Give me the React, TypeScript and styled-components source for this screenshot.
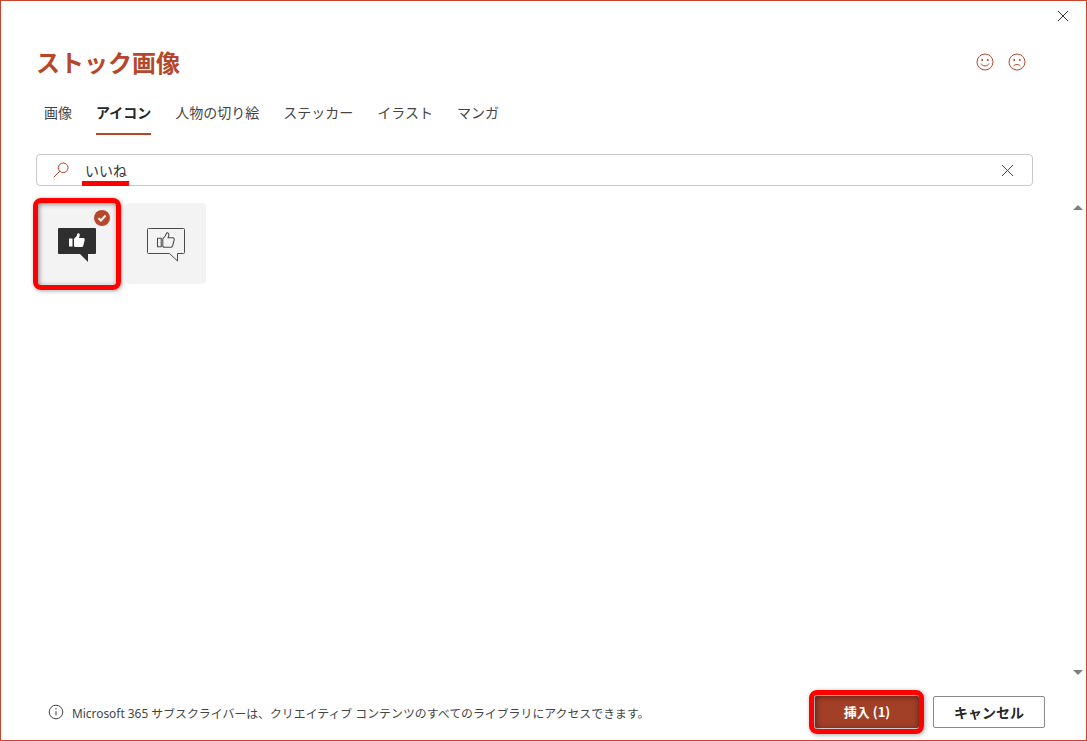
import React from "react";
import styled, { createGlobalStyle } from "styled-components";

const FONT = `"Noto Sans CJK JP", "Noto Sans", sans-serif`;
const LATIN = `"Noto Sans", "Noto Sans CJK JP", sans-serif`;
const ACCENT = "#b7472a";

const Global = createGlobalStyle`
  html, body { margin: 0; padding: 0; background: #fff; }
  * { box-sizing: border-box; }
`;

const Dialog = styled.div`
  width: 1087px;
  height: 741px;
  border: 1px solid #c8442a;
  background: #fff;
  position: relative;
  display: flex;
  flex-direction: column;
  font-family: ${FONT};
  color: #333;
  overflow: hidden;
`;

const CloseRow = styled.div`
  height: 30px;
  display: flex;
  justify-content: flex-end;
  padding: 9px 17px 0 0;
`;

const Body = styled.div`
  flex: 1;
  padding: 0 53px 0 35px;
  display: flex;
  flex-direction: column;
  min-height: 0;
`;

const Header = styled.div`
  height: 58px;
  display: flex;
  align-items: center;
  justify-content: space-between;
  padding: 3px 6px 0 0;
`;

const Title = styled.h1`
  margin: 0;
  font-size: 24px;
  line-height: 34px;
  font-weight: 700;
  color: ${ACCENT};
`;

const Faces = styled.div`
  display: flex;
  gap: 12px;
`;

const Tabs = styled.div`
  display: flex;
  gap: 24px;
  height: 45px;
  padding-left: 8px;
  margin-top: 1px;
`;

const Tab = styled.div<{ $active?: boolean }>`
  height: 45px;
  padding-top: 12px;
  font-size: 14px;
  line-height: 20px;
  font-weight: ${(p) => (p.$active ? 700 : 400)};
  color: ${(p) => (p.$active ? "#262626" : "#444")};
  border-bottom: 2px solid ${(p) => (p.$active ? ACCENT : "transparent")};
`;

const Search = styled.div`
  margin-top: 19px;
  height: 32px;
  border: 1px solid #c8c8c8;
  border-radius: 4px;
  display: flex;
  align-items: center;
  padding: 0 18px 0 15px;
  position: relative;
`;

const SearchText = styled.span`
  margin-left: 15px;
  font-size: 14px;
  line-height: 20px;
  color: #333;
  flex: 1;
`;

const Underline = styled.span`
  position: absolute;
  left: 45px;
  top: 26px;
  width: 47px;
  height: 5px;
  background: #f00;
`;

const Grid = styled.div`
  margin-top: 17px;
  display: flex;
  gap: 8px;
  flex: 1;
`;

const Tile = styled.div`
  width: 81px;
  height: 81px;
  background: #f3f3f3;
  border-radius: 4px;
  display: flex;
  align-items: center;
  justify-content: center;
  position: relative;
`;

const Highlight = styled.span`
  position: absolute;
  left: -3px;
  top: -5px;
  width: 88px;
  height: 92px;
  border: 5px solid #f00;
  border-radius: 8px;
  box-shadow: 1px 1px 4px rgba(0, 0, 0, 0.35), inset 1px 1px 5px rgba(0, 0, 0, 0.45);
`;

const Check = styled.span`
  position: absolute;
  left: 58px;
  top: 7px;
  width: 16px;
  height: 16px;
  border-radius: 50%;
  background: ${ACCENT};
  display: flex;
  align-items: center;
  justify-content: center;
`;

const Footer = styled.div`
  height: 57px;
  padding: 0 41px 0 47px;
  display: flex;
  align-items: center;
  position: relative;
`;

const Notice = styled.div`
  flex: 1;
  display: flex;
  align-items: center;
  gap: 8px;
  font-size: 11.9px;
  color: #444;
  font-family: ${LATIN};
`;

const NoticeText = styled.span`
  line-height: 16px;
  padding-top: 2px;
`;

const Primary = styled.div`
  width: 104px;
  height: 32px;
  background: #a23f27;
  color: #fff;
  font-size: 13px;
  font-weight: 700;
  border-radius: 2px;
  display: flex;
  align-items: center;
  justify-content: center;
  position: relative;
`;

const PrimaryRing = styled.span`
  position: absolute;
  left: -6px;
  top: -6px;
  width: 115px;
  height: 44px;
  border: 5px solid #f00;
  border-radius: 8px;
  box-shadow: 1px 1px 4px rgba(0, 0, 0, 0.35), inset 1px 1px 6px rgba(0, 0, 0, 0.6);
`;

const Secondary = styled.div`
  width: 112px;
  height: 32px;
  margin-left: 14px;
  background: #fff;
  color: #262626;
  border: 1px solid #8a8a8a;
  border-radius: 2px;
  font-size: 14px;
  font-weight: 700;
  display: flex;
  align-items: center;
  justify-content: center;
`;

const ScrollArrow = styled.span<{ $down?: boolean }>`
  position: absolute;
  right: 3px;
  top: ${(p) => (p.$down ? "669px" : "204px")};
  width: 0;
  height: 0;
  border-left: 5px solid transparent;
  border-right: 5px solid transparent;
  ${(p) =>
    p.$down ? "border-top: 5px solid #808080;" : "border-bottom: 5px solid #808080;"}
`;

const Face = ({ sad }: { sad?: boolean }) => (
  <svg width="20" height="20" viewBox="0 0 20 20" fill="none" stroke={ACCENT} strokeWidth="1">
    <circle cx="10" cy="10" r="8" />
    <circle cx="7.2" cy="8" r="1" fill={ACCENT} stroke="none" />
    <circle cx="12.8" cy="8" r="1" fill={ACCENT} stroke="none" />
    {sad ? <path d="M6.5 14c1.800-2 5.200-2 7 0" /> : <path d="M6 11.500c1.400 3.200 6.600 3.200 8 0" />}
  </svg>
);

const THUMB =
  "M0 5.500h3.500v8H0z M5 5.800C6.500 4.500 8 3 8.300 1C8.500 0 10.500 0 10.700 1.800C10.800 3 10.300 4.300 10 5H14.500C15.500 5 16 6 15.700 7L14.300 12.500C14 13.500 13.300 14 12.500 14H7C6 14 5.500 13.600 5 13.200Z";

export default function App() {
  return (
    <Dialog>
      <Global />
      <CloseRow>
        <svg width="12" height="12" viewBox="0 0 12 12" stroke="#333" strokeWidth="1" fill="none">
          <path d="M1 1l10 10M11 1L1 11" />
        </svg>
      </CloseRow>
      <Body>
        <Header>
          <Title>ストック画像</Title>
          <Faces>
            <Face />
            <Face sad />
          </Faces>
        </Header>
        <Tabs>
          <Tab>画像</Tab>
          <Tab $active>アイコン</Tab>
          <Tab>人物の切り絵</Tab>
          <Tab>ステッカー</Tab>
          <Tab>イラスト</Tab>
          <Tab>マンガ</Tab>
        </Tabs>
        <Search>
          <svg width="18" height="18" viewBox="0 0 18 18" fill="none" stroke={ACCENT} strokeWidth="1">
            <circle cx="11.200" cy="6.800" r="4.800" />
            <path d="M7.800 10.200L1.800 16.200" />
          </svg>
          <SearchText>いいね</SearchText>
          <Underline />
          <svg width="13" height="13" viewBox="0 0 13 13" stroke="#444" strokeWidth="1" fill="none">
            <path d="M1 1l11 11M12 1L1 12" />
          </svg>
        </Search>
        <Grid>
          <Tile>
            <svg width="38" height="36" viewBox="0 0 38 36">
              <path
                d="M1 2h36a1 1 0 0 1 1 1v24a1 1 0 0 1-1 1h-7v8l-8-8H1a1 1 0 0 1-1-1V3a1 1 0 0 1 1-1z"
                fill="#2f2f2f"
              />
              <path transform="translate(11 7)" d={THUMB} fill="#fff" />
            </svg>
            <Highlight />
            <Check>
              <svg width="10" height="10" viewBox="0 0 10 10" fill="none" stroke="#fff" strokeWidth="2">
                <path d="M1.500 5.200l2.400 2.300 4.700-5" />
              </svg>
            </Check>
          </Tile>
          <Tile>
            <svg width="38" height="36" viewBox="0 0 38 36">
              <path
                d="M1.500 2.500h35a1 1 0 0 1 1 1v23a1 1 0 0 1-1 1h-6v7.500l-8-7.500H1.500a1 1 0 0 1-1-1v-23a1 1 0 0 1 1-1z"
                fill="none"
                stroke="#4a4a4a"
              />
              <path
                transform="translate(10.500 6.500) scale(1.060)"
                d={THUMB}
                fill="none"
                stroke="#4a4a4a"
              />
            </svg>
          </Tile>
        </Grid>
      </Body>
      <Footer>
        <Notice>
          <svg width="16" height="16" viewBox="0 0 16 16" fill="none" stroke="#444" strokeWidth="1">
            <circle cx="8" cy="8" r="6.800" />
            <path d="M8 7v4.500" />
            <circle cx="8" cy="4.800" r="0.700" fill="#444" stroke="none" />
          </svg>
          <NoticeText>Microsoft 365 サブスクライバーは、クリエイティブ コンテンツのすべてのライブラリにアクセスできます。</NoticeText>
        </Notice>
        <Primary>
          挿入 (1)
          <PrimaryRing />
        </Primary>
        <Secondary>キャンセル</Secondary>
      </Footer>
      <ScrollArrow />
      <ScrollArrow $down />
    </Dialog>
  );
}
